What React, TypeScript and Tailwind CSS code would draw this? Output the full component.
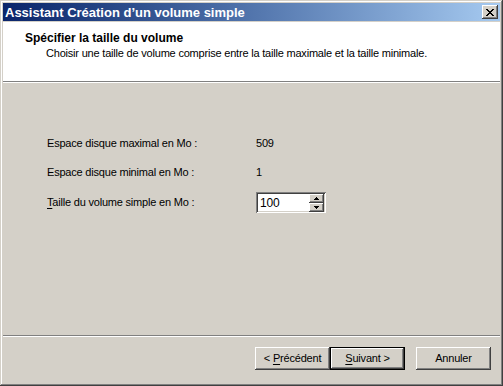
import React from "react";

const raised =
  "bg-[#D4D0C8] shadow-[inset_-1px_-1px_#404040,inset_1px_1px_#ffffff,inset_-2px_-2px_#808080,inset_2px_2px_#D4D0C8]";

function Button({
  children,
  isDefault,
}: {
  children: React.ReactNode;
  isDefault?: boolean;
}) {
  if (isDefault) {
    return (
      <div className="w-[75px] h-[23px] border border-black">
        <div className={`${raised} w-full h-full flex items-center justify-center`}>
          {children}
        </div>
      </div>
    );
  }
  return (
    <div className={`${raised} w-[75px] h-[23px] flex items-center justify-center`}>
      {children}
    </div>
  );
}

function SpinArrow({ up }: { up?: boolean }) {
  return (
    <div className={`${raised} w-[15px] h-[9px] flex items-center justify-center`}>
      <svg width="5" height="3" viewBox="0 0 5 3" shapeRendering="crispEdges">
        {up ? (
          <path d="M2 0h1v1h1v1h1v1H0V2h1V1h1z" fill="#000" />
        ) : (
          <path d="M0 0h5v1H4v1H3v1H2V2H1V1H0z" fill="#000" />
        )}
      </svg>
    </div>
  );
}

export default function App() {
  return (
    <div
      className="w-[503px] h-[386px] bg-[#D4D0C8] flex flex-col p-[3px] text-[11px] tracking-[-0.2px] text-black shadow-[inset_-1px_-1px_#404040,inset_1px_1px_#D4D0C8,inset_-2px_-2px_#808080,inset_2px_2px_#ffffff]"
      style={{ fontFamily: '"Liberation Sans", Arial, sans-serif' }}
    >
      {/* Title bar */}
      <div className="h-[18px] flex items-center justify-between pl-[2px] pr-[2px] bg-gradient-to-r from-[#0A246A] to-[#A6CAF0]">
        <span className="font-bold text-white text-[13px] tracking-normal leading-none">
          Assistant Création d’un volume simple
        </span>
        <div className={`${raised} w-[16px] h-[14px] flex items-center justify-center`}>
          <svg width="8" height="7" viewBox="0 0 8 7" shapeRendering="crispEdges">
            <path
              d="M0 0h2v1h1v1h2V1h1V0h2v1H7v1H6v1H5v1h1v1h1v1h1v1H6V6H5V5H3v1H2v1H0V6h1V5h1V4h1V3H2V2H1V1H0z"
              fill="#000"
            />
          </svg>
        </div>
      </div>

      {/* Header */}
      <div className="mt-[1px] h-[59px] bg-white pl-[22px] pt-[10px]">
        <div className="font-bold text-[12px] tracking-normal leading-[13px]">
          Spécifier la taille du volume
        </div>
        <div className="pl-[21px] mt-[2px] leading-[13px]">
          Choisir une taille de volume comprise entre la taille maximale et la taille minimale.
        </div>
      </div>
      <div className="h-[2px] border-t border-[#808080] border-b border-b-white" />

      {/* Body */}
      <div className="flex-1 pl-[44px] pt-[52px]">
        <div className="flex items-center h-[16px]">
          <span className="w-[209px]">Espace disque maximal en Mo :</span>
          <span>509</span>
        </div>
        <div className="flex items-center h-[16px] mt-[13px]">
          <span className="w-[209px]">Espace disque minimal en Mo :</span>
          <span>1</span>
        </div>
        <div className="flex items-center mt-[12px]">
          <span className="w-[209px]">
            <span className="underline underline-offset-2">T</span>aille du volume simple en Mo :
          </span>
          <div className="w-[70px] h-[21px] bg-white flex shadow-[inset_1px_1px_#808080,inset_-1px_-1px_#ffffff,inset_2px_2px_#404040,inset_-2px_-2px_#D4D0C8]">
            <div className="flex-1 flex items-center pl-[4px] text-[12px]">100</div>
            <div className="flex flex-col pr-[2px] pt-[2px]">
              <SpinArrow up />
              <SpinArrow />
            </div>
          </div>
        </div>
      </div>

      {/* Footer */}
      <div className="h-[2px] border-t border-[#808080] border-b border-b-white" />
      <div className="h-[46px] flex items-start pt-[10px] pl-[252px]">
        <Button>
          &lt; <span className="underline underline-offset-2 ml-[3px]">P</span>récédent
        </Button>
        <Button isDefault>
          <span className="underline underline-offset-2">S</span>uivant &gt;
        </Button>
        <div className="ml-[11px]">
          <Button>Annuler</Button>
        </div>
      </div>
    </div>
  );
}
